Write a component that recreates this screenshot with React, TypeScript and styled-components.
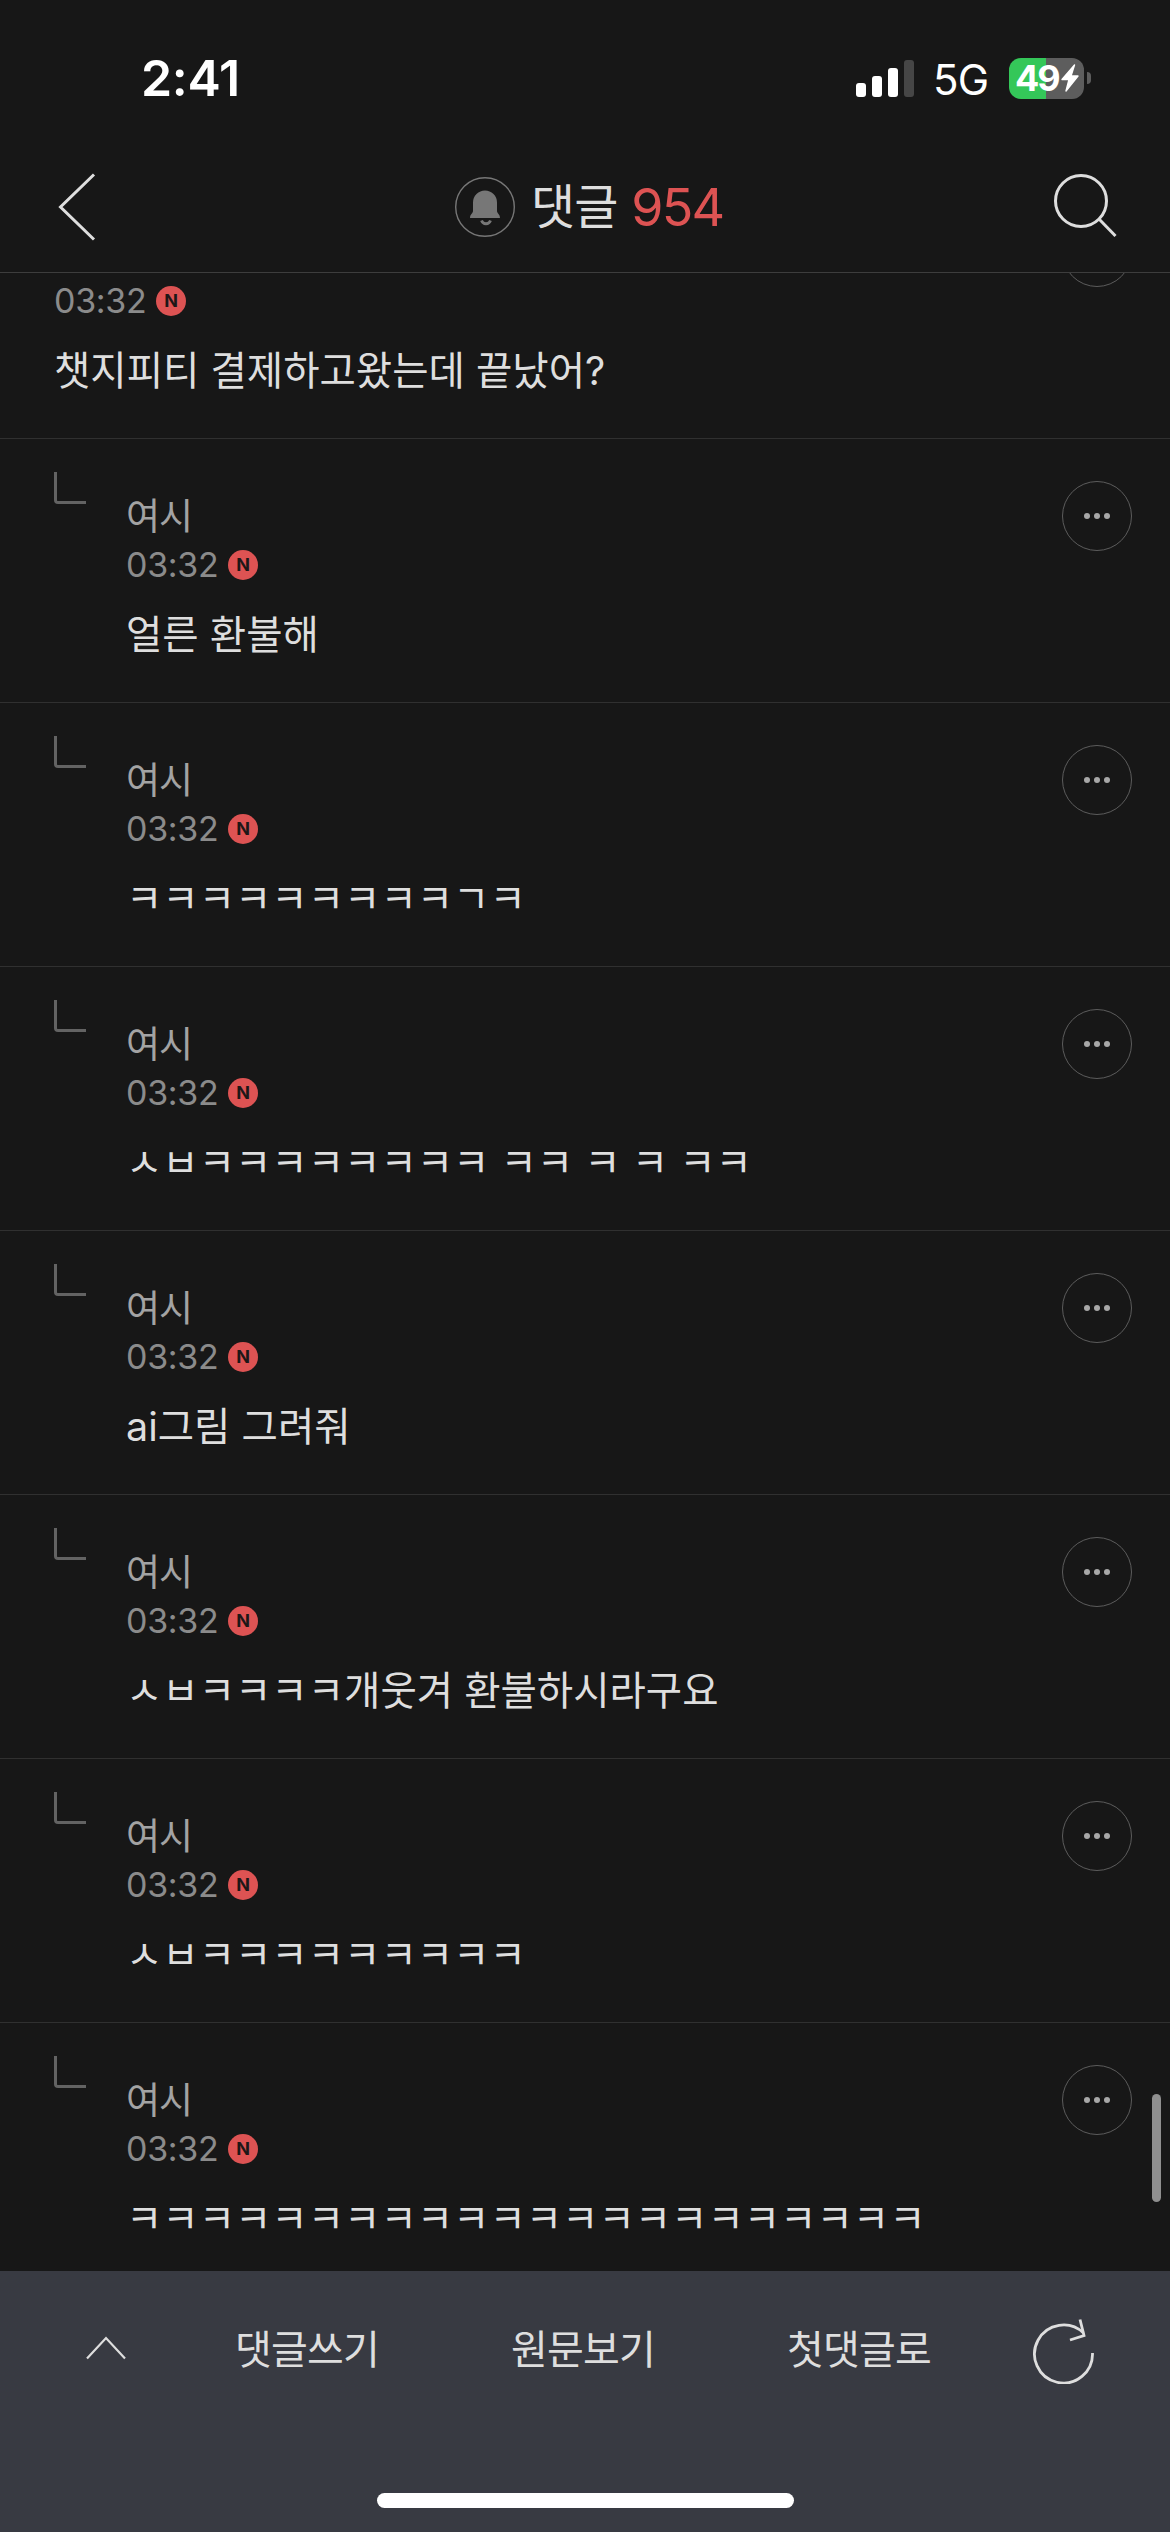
import React from "react";
import styled, { createGlobalStyle } from "styled-components";

const GlobalStyle = createGlobalStyle`
  * { box-sizing: border-box; }
  html, body { margin: 0; padding: 0; background: #171717; }
  body { font-family: Inter, "Noto Sans CJK KR", sans-serif; }
  button { background: none; border: 0; padding: 0; margin: 0; font: inherit; color: inherit; }
  svg { display: block; }
`;

const Screen = styled.div`
  position: relative;
  display: flex;
  flex-direction: column;
  width: 1170px;
  height: 2532px;
  overflow: hidden;
  background: #171717;
  color: #dedede;
`;

const StatusBar = styled.div`
  display: flex;
  align-items: center;
  justify-content: space-between;
  height: 156px;
  padding: 0 79px 0 141px;
  color: #fff;
`;

const Clock = styled.span`
  font-size: 50px;
  font-weight: 600;
  line-height: 60px;
  letter-spacing: -0.3px;
`;

const StatusIcons = styled.div`
  display: flex;
  align-items: center;
`;

const Signal = styled.div`
  display: flex;
  align-items: flex-end;
  gap: 6px;
  height: 37px;
  margin-right: 18px;
`;

const SignalBar = styled.span<{ $height: number; $off?: boolean }>`
  width: 10px;
  height: ${(p) => p.$height}px;
  border-radius: 3px;
  background: ${(p) => (p.$off ? "#464646" : "#fff")};
`;

const Network = styled.span`
  width: 77px;
  padding-left: 1px;
  font-size: 42px;
  line-height: 50px;
  letter-spacing: -0.8px;
  padding-top: 3px;
`;

const Battery = styled.div`
  display: flex;
  align-items: center;
  width: 75px;
  height: 41px;
  padding-left: 6px;
  border-radius: 12px;
  background: linear-gradient(90deg, #34c759 50%, #5d5d5d 50%);
`;

const BatteryLevel = styled.span`
  width: 46px;
  font-size: 36px;
  font-weight: 700;
  line-height: 41px;
  letter-spacing: -2px;
`;

const BatteryCap = styled.span`
  width: 4px;
  height: 12px;
  margin-left: 3px;
  border-radius: 0 5px 5px 0;
  background: #5d5d5d;
`;

const Header = styled.header`
  display: grid;
  grid-template-columns: 120px 1fr 120px;
  align-items: center;
  height: 117px;
  padding-bottom: 14px;
  border-bottom: 1px solid #3d3d3d;
`;

const BackButton = styled.button`
  padding-left: 57px;
`;

const SearchButton = styled.button`
  justify-self: end;
  padding: 0 52px 5px 0;
`;

const Title = styled.h1`
  display: flex;
  align-items: center;
  margin: 0;
  padding-left: 335px;
  font-size: 50px;
  font-weight: 400;
  line-height: 60px;
`;

const TitleText = styled.span`
  margin-left: 16px;
  font-size: 48px;
  letter-spacing: -1px;
`;

const Count = styled.span`
  margin-left: 14px;
  padding-top: 2px;
  font-size: 52px;
  letter-spacing: -1.8px;
  color: #dd5353;
`;

const Comments = styled.main`
  flex: 1;
  min-height: 0;
  overflow: hidden;
`;

const CommentList = styled.ul`
  margin: -98px 0 0;
  padding: 0;
  list-style: none;
`;

const CommentRow = styled.li<{ $reply: boolean }>`
  display: grid;
  grid-template-columns: ${(p) => (p.$reply ? "72px" : "0")} 1fr 70px;
  height: 264px;
  padding: 0 38px 0 54px;
  border-bottom: 1px solid #303030;
`;

const ReplyMark = styled.span`
  width: 32px;
  height: 32px;
  margin-top: 33px;
  border: solid #636363;
  border-width: 0 0 3px 3px;
  border-bottom-left-radius: 4px;
`;

const CommentContent = styled.div`
  grid-column: 2;
  padding-top: 53px;
  white-space: nowrap;
`;

const Author = styled.div`
  height: 48px;
  font-size: 37px;
  font-weight: 400;
  line-height: 49px;
  letter-spacing: -1px;
  color: #a3a3a3;
`;

const Meta = styled.div`
  display: flex;
  align-items: center;
  height: 50px;
  color: #8b8b8b;
`;

const Time = styled.time`
  width: 102px;
  font-size: 34px;
  font-weight: 400;
  line-height: 50px;
  letter-spacing: -0.3px;
`;

const NewBadge = styled.span`
  display: flex;
  align-items: center;
  justify-content: center;
  width: 30px;
  height: 30px;
  border-radius: 50%;
  background: #dd5353;
  color: #1d1717;
  font-size: 18px;
  font-weight: 700;
  line-height: 30px;
`;

const Body = styled.p`
  margin: 15px 0 0;
  font-size: 39.5px;
  font-weight: 400;
  line-height: 60px;
`;

const MoreButton = styled.button`
  display: flex;
  align-items: center;
  justify-content: center;
  gap: 4px;
  grid-column: 3;
  width: 70px;
  height: 70px;
  margin-top: 42px;
  border: 1px solid #5c5c5c;
  border-radius: 50%;
`;

const Dot = styled.i`
  width: 6px;
  height: 6px;
  border-radius: 50%;
  background: #a8a8a8;
`;

const ScrollThumb = styled.div`
  position: absolute;
  top: 2094px;
  right: 9px;
  width: 9px;
  height: 108px;
  border-radius: 5px;
  background: #8f8f8f;
`;

const BottomBar = styled.footer`
  display: flex;
  flex-direction: column;
  align-items: center;
  justify-content: space-between;
  height: 261px;
  padding-bottom: 24px;
  background: #383a42;
`;

const Toolbar = styled.nav`
  display: grid;
  grid-template-columns: 169px repeat(3, 276px) 173px;
  justify-items: center;
  align-items: center;
  width: 100%;
  height: 158px;
`;

const ToolIcon = styled.button<{ $end?: boolean }>`
  justify-self: ${(p) => (p.$end ? "start" : "end")};
  margin: ${(p) => (p.$end ? "2px 0 0 35px" : "0 42px 5px 0")};
`;

const ToolText = styled.button`
  font-size: 40px;
  font-weight: 400;
  line-height: 60px;
  letter-spacing: -0.8px;
  color: #dedede;
`;

const HomeIndicator = styled.div`
  width: 417px;
  height: 15px;
  border-radius: 8px;
  background: #fff;
`;

type Comment = { author?: string; time: string; text: string; reply: boolean };

const comments: Comment[] = [
  { time: "03:32", text: "챗지피티 결제하고왔는데 끝났어?", reply: false },
  { author: "여시", time: "03:32", text: "얼른 환불해", reply: true },
  { author: "여시", time: "03:32", text: "ㅋㅋㅋㅋㅋㅋㅋㅋㅋㄱㅋ", reply: true },
  { author: "여시", time: "03:32", text: "ㅅㅂㅋㅋㅋㅋㅋㅋㅋㅋ ㅋㅋ ㅋ ㅋ ㅋㅋ", reply: true },
  { author: "여시", time: "03:32", text: "ai그림 그려줘", reply: true },
  { author: "여시", time: "03:32", text: "ㅅㅂㅋㅋㅋㅋ개웃겨 환불하시라구요", reply: true },
  { author: "여시", time: "03:32", text: "ㅅㅂㅋㅋㅋㅋㅋㅋㅋㅋㅋ", reply: true },
  { author: "여시", time: "03:32", text: "ㅋㅋㅋㅋㅋㅋㅋㅋㅋㅋㅋㅋㅋㅋㅋㅋㅋㅋㅋㅋㅋㅋ", reply: true },
];

const BackIcon = () => (
  <svg width="40" height="68" viewBox="0 0 40 68" fill="none" stroke="#dedede" strokeWidth="3">
    <path d="M37 1.5 3.5 34 37 66.5" />
  </svg>
);

const BellIcon = () => (
  <svg width="60" height="60" viewBox="0 0 60 60" fill="none">
    <circle cx="30" cy="30" r="29.3" stroke="#777" strokeWidth="1.4" />
    <path d="M18 34V25.500a12 12 0 0 1 24 0V34c0 2.500 3 3 3 7H15c0-4 3-4.500 3-7Z" fill="#777" />
    <path d="M26.500 43.500c1.500 4.300 7.500 4.300 9 0" stroke="#777" strokeWidth="2.800" />
  </svg>
);

const SearchIcon = () => (
  <svg width="66" height="66" viewBox="0 0 66 66" fill="none" stroke="#dedede" strokeWidth="3">
    <circle cx="29" cy="29" r="25.5" />
    <path d="M47 47 63.5 64" />
  </svg>
);

const BoltIcon = () => (
  <svg width="18" height="28" viewBox="0 0 18 28" fill="#fff" stroke="#fff" strokeWidth="1.4" strokeLinejoin="round">
    <path d="M13.500 1 1 15.500h7L5 27 17 12h-7Z" />
  </svg>
);

const UpIcon = () => (
  <svg width="42" height="25" viewBox="0 0 42 25" fill="none" stroke="#dedede" strokeWidth="2.2">
    <path d="M2 23.5 21 3l19 20.5" />
  </svg>
);

const RefreshIcon = () => (
  <svg width="64" height="66" viewBox="0 0 64 66" fill="none" stroke="#dedede" strokeWidth="2.8">
    <path d="M60.5 35A29 29 0 1 1 51.5 15" />
    <path d="M48 1.5 52 17.5 38 22" />
  </svg>
);

export default function App() {
  return (
    <Screen>
      <GlobalStyle />
      <StatusBar>
        <Clock>2:41</Clock>
        <StatusIcons>
          <Signal>
            <SignalBar $height={14} />
            <SignalBar $height={21} />
            <SignalBar $height={29} />
            <SignalBar $height={37} $off />
          </Signal>
          <Network>5G</Network>
          <Battery>
            <BatteryLevel>49</BatteryLevel>
            <BoltIcon />
          </Battery>
          <BatteryCap />
        </StatusIcons>
      </StatusBar>
      <Header>
        <BackButton aria-label="뒤로">
          <BackIcon />
        </BackButton>
        <Title>
          <BellIcon />
          <TitleText>댓글</TitleText>
          <Count>954</Count>
        </Title>
        <SearchButton aria-label="검색">
          <SearchIcon />
        </SearchButton>
      </Header>
      <Comments>
        <CommentList>
          {comments.map((c, i) => (
            <CommentRow key={i} $reply={c.reply}>
              {c.reply && <ReplyMark />}
              <CommentContent>
                <Author>{c.author}</Author>
                <Meta>
                  <Time>{c.time}</Time>
                  <NewBadge>N</NewBadge>
                </Meta>
                <Body>{c.text}</Body>
              </CommentContent>
              <MoreButton aria-label="더보기">
                <Dot />
                <Dot />
                <Dot />
              </MoreButton>
            </CommentRow>
          ))}
        </CommentList>
      </Comments>
      <ScrollThumb />
      <BottomBar>
        <Toolbar>
          <ToolIcon aria-label="위로">
            <UpIcon />
          </ToolIcon>
          <ToolText>댓글쓰기</ToolText>
          <ToolText>원문보기</ToolText>
          <ToolText>첫댓글로</ToolText>
          <ToolIcon $end aria-label="새로고침">
            <RefreshIcon />
          </ToolIcon>
        </Toolbar>
        <HomeIndicator />
      </BottomBar>
    </Screen>
  );
}
